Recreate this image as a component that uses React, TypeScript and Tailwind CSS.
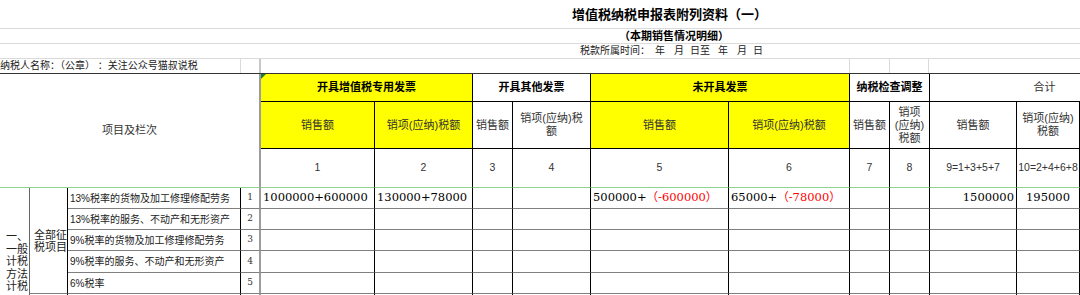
import React from 'react';

const SANS = "font-['Liberation_Sans','Noto_Sans_CJK_SC',sans-serif]";
const SERIF = "font-['DejaVu_Serif','Noto_Sans_CJK_SC',serif]";

const items = [
  { name: '13%税率的货物及加工修理修配劳务', no: '1' },
  { name: '13%税率的服务、不动产和无形资产', no: '2' },
  { name: '9%税率的货物及加工修理修配劳务', no: '3' },
  { name: '9%税率的服务、不动产和无形资产', no: '4' },
  { name: '6%税率', no: '5' },
  { name: '', no: '' },
  { name: '', no: '' },
];

const groups = [
  { label: '开具增值税专用发票', span: 'col-span-2', yellow: true, bold: true },
  { label: '开具其他发票', span: 'col-span-2', yellow: false, bold: true },
  { label: '未开具发票', span: 'col-span-2', yellow: true, bold: true },
  { label: '纳税检查调整', span: 'col-span-2', yellow: false, bold: true },
  { label: '合计', span: 'col-span-3', yellow: false, bold: false },
];

const subHeads: { lines: string[]; yellow: boolean }[] = [
  { lines: ['销售额'], yellow: true },
  { lines: ['销项(应纳)税额'], yellow: true },
  { lines: ['销售额'], yellow: false },
  { lines: ['销项(应纳)税', '额'], yellow: false },
  { lines: ['销售额'], yellow: true },
  { lines: ['销项(应纳)税额'], yellow: true },
  { lines: ['销售额'], yellow: false },
  { lines: ['销项', '(应纳)', '税额'], yellow: false },
  { lines: ['销售额'], yellow: false },
  { lines: ['销项(应纳)', '税额'], yellow: false },
  { lines: [], yellow: false },
];

const colNos = ['1', '2', '3', '4', '5', '6', '7', '8', '9=1+3+5+7', '10=2+4+6+8', ''];

const dataCell = 'flex items-center border-r border-b border-r-black border-b-[#7f7f7f] overflow-hidden whitespace-nowrap';

function Red({ children }: { children: React.ReactNode }) {
  return <span className="text-[#ff0000]">{children}</span>;
}

function FirstRowValues() {
  return (
    <>
      <div className={`${dataCell} pl-[2px]`}>1000000+600000</div>
      <div className={`${dataCell} pl-[2px]`}>130000+78000</div>
      <div className={dataCell} />
      <div className={dataCell} />
      <div className={`${dataCell} pl-[2px]`}>
        500000+<Red>（-600000）</Red>
      </div>
      <div className={`${dataCell} pl-[2px]`}>
        65000+<Red>（-78000）</Red>
      </div>
      <div className={dataCell} />
      <div className={dataCell} />
      <div className={`${dataCell} justify-end pr-[2px]`}>1500000</div>
      <div className={`${dataCell} justify-center`}>195000</div>
      <div className={dataCell} />
    </>
  );
}

function EmptyValues() {
  return (
    <>
      {Array.from({ length: 11 }).map((_, i) => (
        <div key={i} className={dataCell} />
      ))}
    </>
  );
}

export default function App() {
  return (
    <div className={`w-[1080px] h-[295px] overflow-hidden bg-white text-black ${SANS}`}>
      <div className="w-[1160px]">
        {/* title rows */}
        <div className="h-[29px] border-b border-[#dadada] flex items-center pl-[572px] text-[13px] font-bold leading-none">
          增值税纳税申报表附列资料（一）
        </div>
        <div className="h-[15px] border-b border-[#dadada] flex items-center pl-[619px] text-[11px] font-bold leading-none">
          （本期销售情况明细）
        </div>
        <div className="h-[15px] border-b border-[#dadada] flex items-center pl-[580px] text-[10px] leading-none text-[#222]">
          <span>税款所属时间：</span>
          <span className="ml-[5px]">年</span>
          <span className="ml-[9px]">月</span>
          <span className="ml-[6px]">日至</span>
          <span className="ml-[8px]">年</span>
          <span className="ml-[9px]">月</span>
          <span className="ml-[6px]">日</span>
        </div>
        <div className="h-[14px] flex text-[10px] leading-none text-[#222]">
          <div className="w-[241px] border-r border-[#dadada] flex items-center whitespace-nowrap">
            纳税人名称：（公章） ：关注公众号猫叔说税
          </div>
          <div className="w-[20px] border-r-2 border-[#c8c8c8]" />
          <div className="w-[589px] border-r border-[#dadada]" />
          <div className="w-[40px] border-r border-[#dadada]" />
          <div className="w-[39px] border-r border-[#dadada]" />
          <div className="flex-1" />
        </div>

        {/* main table */}
        <div className="grid grid-cols-[30px_38px_173px_20px_114px_98px_40px_78px_138px_121px_40px_40px_87px_63px_80px] grid-rows-[28px_47px_39px_21px_21px_21px_22px_21px_21px_21px] border-t border-[#333]">
          {/* header */}
          <div className="col-span-4 row-span-3 flex items-center justify-center border-r-2 border-r-[#9c9c9c] border-b border-b-[#8fd18f] text-[11px] text-[#333]">
            项目及栏次
          </div>
          {groups.map((g, i) => (
            <div
              key={i}
              className={`${g.span} relative flex items-center justify-center border-r border-b border-black text-[11px] leading-none ${
                g.yellow ? 'bg-[#ffff00]' : 'bg-white'
              } ${g.bold ? 'font-bold text-black' : 'text-[#333]'}`}
            >
              {i === 0 && (
                <span className="absolute left-0 top-0 w-0 h-0 border-t-[5px] border-t-[#1f7a35] border-r-[5px] border-r-transparent" />
              )}
              {g.label}
            </div>
          ))}
          {subHeads.map((s, i) => (
            <div
              key={i}
              className={`flex flex-col items-center justify-center text-center whitespace-nowrap border-r border-b border-black text-[11px] leading-[13px] text-[#333] ${
                s.yellow ? 'bg-[#ffff00]' : 'bg-white'
              }`}
            >
              {s.lines.map((l, j) => (
                <span key={j}>{l}</span>
              ))}
            </div>
          ))}
          {colNos.map((n, i) => (
            <div
              key={i}
              className="flex items-center justify-center whitespace-nowrap border-r border-r-black border-b border-b-[#8fd18f] text-[10.5px] text-[#333]"
            >
              {n}
            </div>
          ))}

          {/* body */}
          <div className="row-span-7 border-r border-r-[#666] border-b border-b-[#7f7f7f] flex items-center pl-[6px] pr-[1px] text-[11px] leading-[12.5px] break-all text-[#222]">
            一、一般计税方法计税
          </div>
          <div className="row-span-5 border-r border-r-black border-b border-b-[#7f7f7f] flex items-center pl-[4px] text-[11px] leading-[12px] break-all text-[#222]">
            全部征税项目
          </div>
          {items.map((it, idx) => (
            <React.Fragment key={idx}>
              {idx === 5 && (
                <div className="row-span-2 border-r border-r-black border-b border-b-[#7f7f7f]" />
              )}
              <div className="flex items-center pl-[2px] border-r border-r-black border-b border-b-[#7f7f7f] text-[10px] whitespace-nowrap overflow-hidden text-[#222]">
                {it.name}
              </div>
              <div className={`flex items-center justify-center border-r-2 border-r-[#9c9c9c] border-b border-b-[#7f7f7f] text-[9px] text-[#333] ${SERIF}`}>
                {it.no}
              </div>
              <div className={`contents ${SERIF} text-[11.5px]`}>
                {idx === 0 ? <FirstRowValues /> : <EmptyValues />}
              </div>
            </React.Fragment>
          ))}
        </div>
      </div>
    </div>
  );
}
